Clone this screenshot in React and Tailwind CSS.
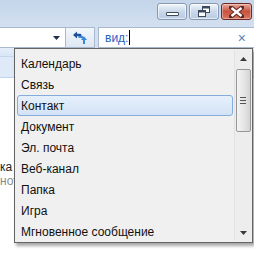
import React from "react";

const items = [
  "Календарь",
  "Связь",
  "Контакт",
  "Документ",
  "Эл. почта",
  "Веб-канал",
  "Папка",
  "Игра",
  "Мгновенное сообщение",
];

function CaptionButton({ kind }) {
  if (kind === "close") {
    return (
      <div className="flex h-[17px] w-[31px] items-center justify-center rounded-[3px] border border-[#6b2a26] bg-gradient-to-b from-[#e8a99b] via-[#c8513f] to-[#d9775f] shadow-[inset_0_0_0_1px_rgba(255,255,255,0.35)]">
        <svg width="15" height="12" viewBox="0 0 15 12">
          <path d="M2 1.5 L13 10.5 M13 1.5 L2 10.5" stroke="#5a2a26" strokeWidth="4.4" strokeLinecap="square" />
          <path d="M2.5 2 L12.5 10 M12.5 2 L2.5 10" stroke="#ffffff" strokeWidth="2.4" />
        </svg>
      </div>
    );
  }
  return (
    <div className="flex h-[17px] w-[30px] items-center justify-center rounded-[3px] border border-[#8798b0] bg-gradient-to-b from-[#f2f6fb] via-[#cad8ea] to-[#b9cbe2] shadow-[inset_0_0_0_1px_rgba(255,255,255,0.6)]">
      {kind === "min" ? (
        <div className="mt-[4px] h-[4px] w-[13px] rounded-[1px] border border-[#3d4a5c] bg-white" />
      ) : (
        <svg width="12" height="11" viewBox="0 0 12 11">
          <rect x="4.5" y="0.5" width="7" height="6" fill="#fff" stroke="#3d4a5c" />
          <rect x="4.5" y="0.5" width="7" height="2" fill="#3d4a5c" />
          <rect x="0.5" y="4.5" width="7" height="6" fill="#fff" stroke="#3d4a5c" />
          <rect x="0.5" y="4.5" width="7" height="2" fill="#3d4a5c" />
        </svg>
      )}
    </div>
  );
}

export default function App() {
  return (
    <div
      className="relative h-[260px] w-[254px] overflow-hidden bg-white text-[12px]"
      style={{ fontFamily: '"Liberation Sans", Arial, sans-serif' }}
    >
      {/* Title bar */}
      <div className="flex h-[27px] items-start justify-end gap-[2px] bg-gradient-to-b from-[#c4d5ea] to-[#d3e0f0] pr-[2px] pt-[3px]">
        <CaptionButton kind="min" />
        <CaptionButton kind="max" />
        <CaptionButton kind="close" />
      </div>

      {/* Address / search row */}
      <div className="flex h-[21px] items-stretch bg-[#d3e0f0]">
        <div className="flex w-[66px] items-center justify-end border border-l-0 border-[#a9b8cc] bg-white pr-[5px]">
          <svg width="7" height="4" viewBox="0 0 7 4">
            <path d="M0 0 H7 L3.5 4 Z" fill="#1e2f4a" />
          </svg>
        </div>
        <div className="flex w-[29px] items-center justify-center border-y border-r border-[#a9b8cc] bg-gradient-to-b from-[#f3f7fc] to-[#dde7f3]">
          <svg width="16" height="15" viewBox="0 0 16 15">
            {/* left arrow */}
            <path d="M1 5 L5 1.5 V3.8 H8 C9 3.8 9.5 4.5 9.5 5.5 V7 H7.5 V6.2 H5 V8.5 Z" fill="#1f4f9a" />
            {/* right arrow */}
            <path d="M6.5 8 H9 C10.5 8 11 8.8 11 10 V14 H13 V10 C13 7.5 11.5 6 9.5 6 H6.5 Z" fill="#3a86d8" />
            <path d="M9 10 L12 6.5 L15 10 Z" fill="#3a86d8" />
          </svg>
        </div>
        <div className="ml-[3px] flex flex-1 items-center border border-r-0 border-[#a9b8cc] bg-white pl-[6px] pr-[8px]">
          <span className="text-[#1c63c4]">вид:</span>
          <span className="ml-[1px] h-[15px] w-px bg-black" />
          <span className="ml-auto text-[14px] leading-none text-[#5a7fb0]">×</span>
        </div>
      </div>

      {/* Content behind the popup */}
      <div className="flex flex-col">
        <div className="h-[9px] border-b border-[#c6d6ea] bg-gradient-to-b from-[#e4eefa] to-[#d8e6f6]" />
        <div className="h-[21px] border-b border-[#c2d4ec] bg-[#dfeaf8]" />
        <div className="mt-[80px] text-[#1e1e1e]">ка</div>
        <div className="-mt-[4px] text-[#8a8a8a]">нот</div>
      </div>

      {/* Suggestion popup */}
      <div className="absolute left-[14px] top-[48px] flex h-[195px] w-[239px] border border-[#646464] bg-[#f0f0f0] shadow-[2px_3px_3px_rgba(0,0,0,0.35)]">
        <div className="flex flex-1 flex-col pl-[2px] pr-[1px] pt-[4px]">
          {items.map((it) => (
            <div
              key={it}
              className={
                it === "Контакт"
                  ? "flex h-[21px] items-center rounded-[3px] border border-[#84acdd] bg-gradient-to-b from-[#e6f0fb] to-[#d3e3f6] pl-[3px] text-[#111]"
                  : "flex h-[21px] items-center border border-transparent pl-[3px] text-[#111]"
              }
            >
              {it}
            </div>
          ))}
        </div>
        {/* Scrollbar */}
        <div className="my-[1px] mr-[1px] flex w-[17px] flex-col items-center border-l border-[#e2e2e2] bg-[#ededed]">
          <div className="flex h-[17px] items-center justify-center">
            <svg width="7" height="4" viewBox="0 0 7 4">
              <path d="M0 4 H7 L3.5 0 Z" fill="#3a3a3a" />
            </svg>
          </div>
          <div className="mt-[2px] flex h-[63px] w-[15px] items-center justify-center rounded-[2px] border border-[#979797] bg-gradient-to-r from-[#f4f4f4] via-[#e6e6e6] to-[#d4d4d4]">
            <div className="flex flex-col gap-[2px]">
              <div className="h-px w-[6px] bg-[#555]" />
              <div className="h-px w-[6px] bg-[#555]" />
              <div className="h-px w-[6px] bg-[#555]" />
            </div>
          </div>
          <div className="flex-1" />
          <div className="flex h-[17px] items-center justify-center">
            <svg width="7" height="4" viewBox="0 0 7 4">
              <path d="M0 0 H7 L3.5 4 Z" fill="#3a3a3a" />
            </svg>
          </div>
        </div>
      </div>
    </div>
  );
}
